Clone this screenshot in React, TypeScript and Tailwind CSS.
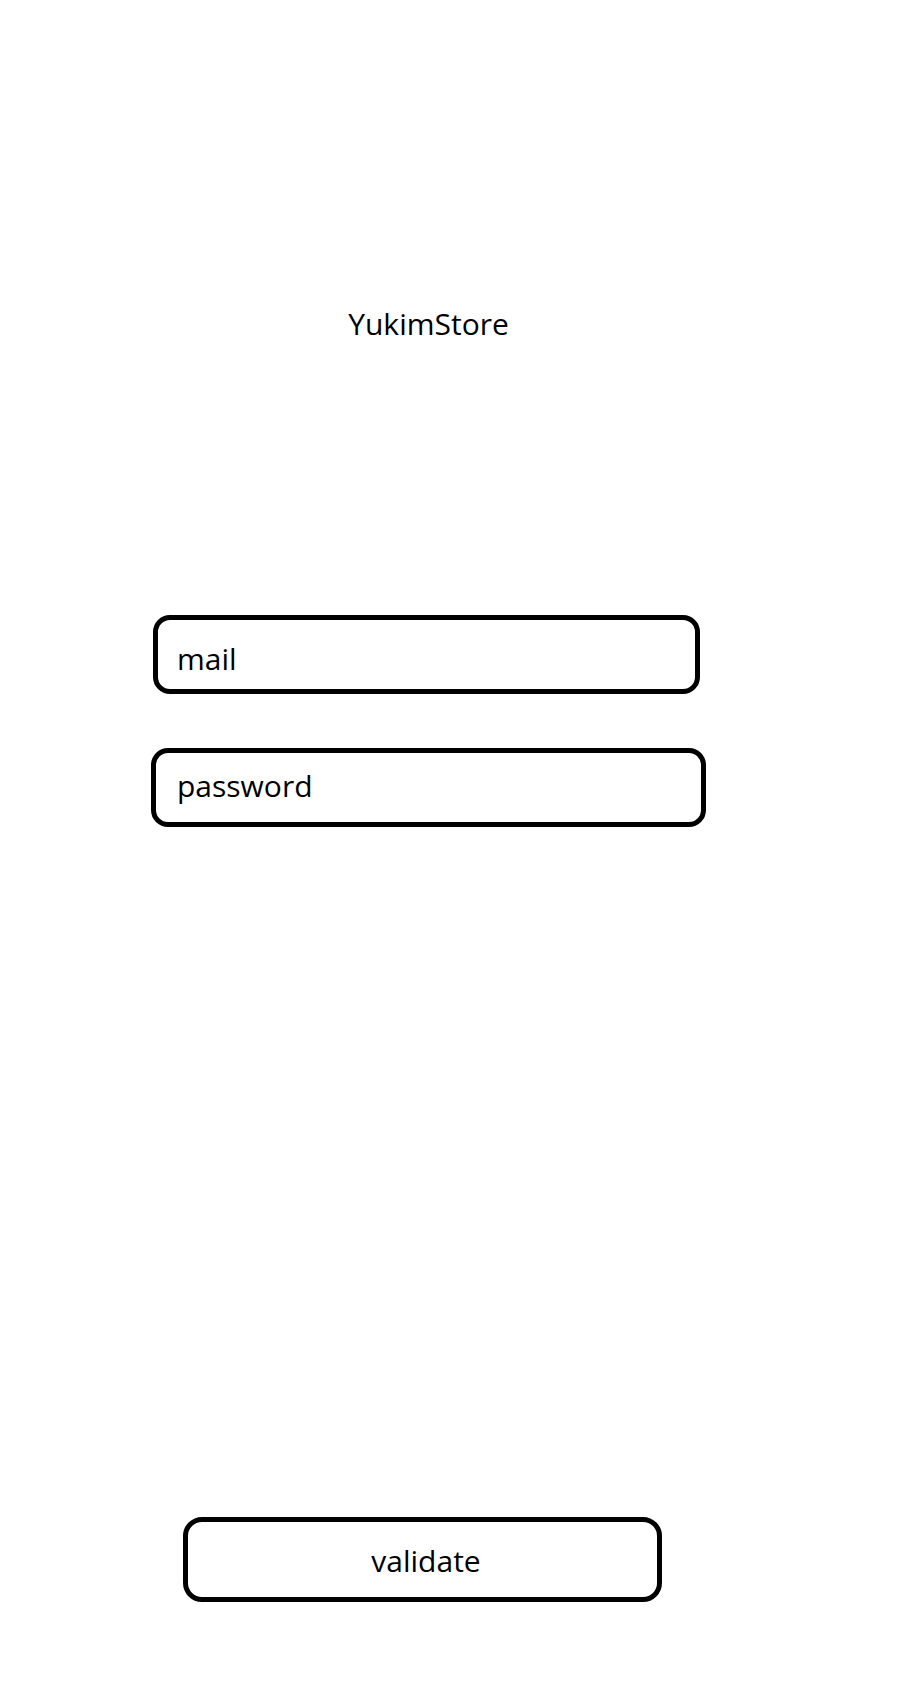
import { useState } from 'react'

// Écran de connexion YukimStore (maquette)
export default function App() {
  const [mail, setMail] = useState('')
  const [password, setPassword] = useState('')

  const font = { fontFamily: '"Open Sans", "Noto Sans", sans-serif' }

  return (
    <div className="min-h-[1698px] w-full bg-white text-black" style={font}>
      <div className="flex flex-col items-start pl-[151px] pt-[309px]">
        <h1 className="w-[555px] text-center text-[30px] font-normal leading-[30px]">YukimStore</h1>

        <input
          type="email"
          value={mail}
          onChange={(e) => setMail(e.target.value)}
          placeholder="mail"
          className="ml-[2px] mt-[276px] box-border h-[79px] w-[547px] rounded-[17px] border-[5px] border-black bg-white pb-[16px] pl-[19px] pt-[23px] text-[30px] leading-[30px] outline-none placeholder:text-black"
        />

        <input
          type="password"
          value={password}
          onChange={(e) => setPassword(e.target.value)}
          placeholder="password"
          className="mt-[54px] box-border h-[79px] w-[555px] rounded-[17px] border-[5px] border-black bg-white pb-[22px] pl-[21px] pt-[17px] text-[30px] leading-[30px] outline-none placeholder:text-black"
        />

        <button
          type="button"
          className="ml-[32px] mt-[690px] box-border h-[85px] w-[479px] rounded-[19px] border-[5px] border-black bg-white pb-[21px] pl-[7px] pt-[24px] text-center text-[30px] leading-[30px]"
        >
          validate
        </button>
      </div>
    </div>
  )
}
